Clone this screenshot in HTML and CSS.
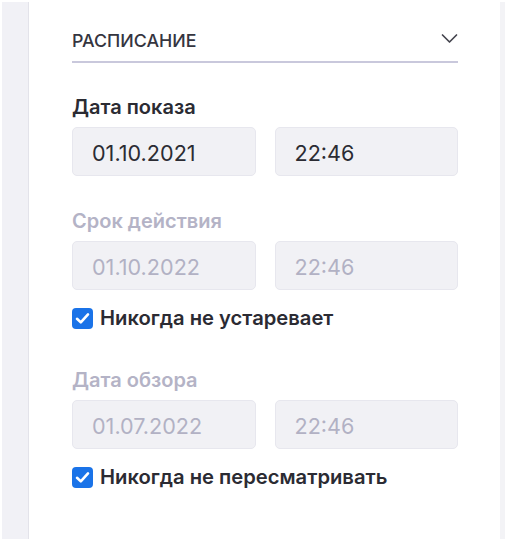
FILE: index.html
```html
<!DOCTYPE html>
<html lang="ru">
<head>
<meta charset="utf-8">
<link rel="stylesheet" href="styles.css">
</head>
<body>
<div class="frame">
  <div class="rail-left"></div>
  <div class="panel">
    <div class="section-head">
      <span class="section-title">РАСПИСАНИЕ</span>
      <svg class="chevron" width="17" height="11" viewBox="0 0 17 11"><path d="M1.5 2 L8.5 9 L15.5 2" fill="none" stroke="#45454f" stroke-width="1.7" stroke-linecap="round" stroke-linejoin="round"/></svg>
    </div>

    <div class="group">
      <div class="label">Дата показа</div>
      <div class="row">
        <div class="field">01.10.2021</div>
        <div class="field">22:46</div>
      </div>
    </div>

    <div class="group disabled">
      <div class="label">Срок действия</div>
      <div class="row">
        <div class="field">01.10.2022</div>
        <div class="field">22:46</div>
      </div>
    </div>
    <label class="check">
      <span class="box"><svg width="15" height="13" viewBox="0 0 15 13"><path d="M2 6.8 L5.8 10.4 L13 2.4" fill="none" stroke="#fff" stroke-width="2.6" stroke-linecap="round" stroke-linejoin="round"/></svg></span>
      <span>Никогда не устаревает</span>
    </label>

    <div class="group disabled">
      <div class="label">Дата обзора</div>
      <div class="row">
        <div class="field">01.07.2022</div>
        <div class="field">22:46</div>
      </div>
    </div>
    <label class="check">
      <span class="box"><svg width="15" height="13" viewBox="0 0 15 13"><path d="M2 6.8 L5.8 10.4 L13 2.4" fill="none" stroke="#fff" stroke-width="2.6" stroke-linecap="round" stroke-linejoin="round"/></svg></span>
      <span>Никогда не пересматривать</span>
    </label>
  </div>
  <div class="rail-right"></div>
</div>
</body>
</html>
```

FILE: styles.css
```css
* { box-sizing: border-box; }
html, body { margin: 0; padding: 0; background: #fff; }
body { font-family: Inter, "Noto Sans", sans-serif; color: #2b2b33; }

.frame {
  display: flex;
  height: 541px;
  padding: 2px 0 2px 2px;
}
.rail-left {
  width: 27px;
  background: #f1f1f6;
  border-right: 1px solid #e3e3ea;
}
.panel {
  flex: 1;
  padding: 26px 42px 0 43px;
}
.rail-right {
  width: 5px;
  margin-right: 1px;
  background: #f3f3f6;
}

.section-head {
  display: flex;
  align-items: flex-start;
  justify-content: space-between;
  height: 35px;
  padding-top: 2px;
  border-bottom: 2px solid #c9c8dc;
}
.section-title {
  font-size: 17.8px;
  line-height: 21px;
  font-weight: 500;
  color: #35353f;
}
.chevron { margin-right: 0; margin-top: 3px; }

.group { margin-top: 32px; }
.group + .group { margin-top: 33px; }
.check + .group { margin-top: 38px; }

.label {
  font-size: 20px;
  font-weight: 600;
  line-height: 24px;
  color: #2b2b33;
  margin-bottom: 8px;
}
.row {
  display: grid;
  grid-template-columns: 1fr 1fr;
  gap: 19px;
}
.field {
  height: 49px;
  background: #f1f1f5;
  border: 1px solid #e7e7ee;
  border-radius: 5px;
  padding-left: 19px;
  padding-top: 3px;
  display: flex;
  align-items: center;
  font-size: 21.6px;
  color: #2b2b33;
}
.disabled .label { color: #b4b3c6; }
.disabled .field { color: #b2b1c4; }

.check {
  display: flex;
  align-items: center;
  gap: 7px;
  margin-top: 16px;
  font-size: 20.2px;
  line-height: 24px;
  font-weight: 600;
  color: #2b2b33;
}
.box {
  width: 21px;
  height: 21px;
  border-radius: 4px;
  background: #1a73e8;
  display: flex;
  align-items: center;
  justify-content: center;
}
```
